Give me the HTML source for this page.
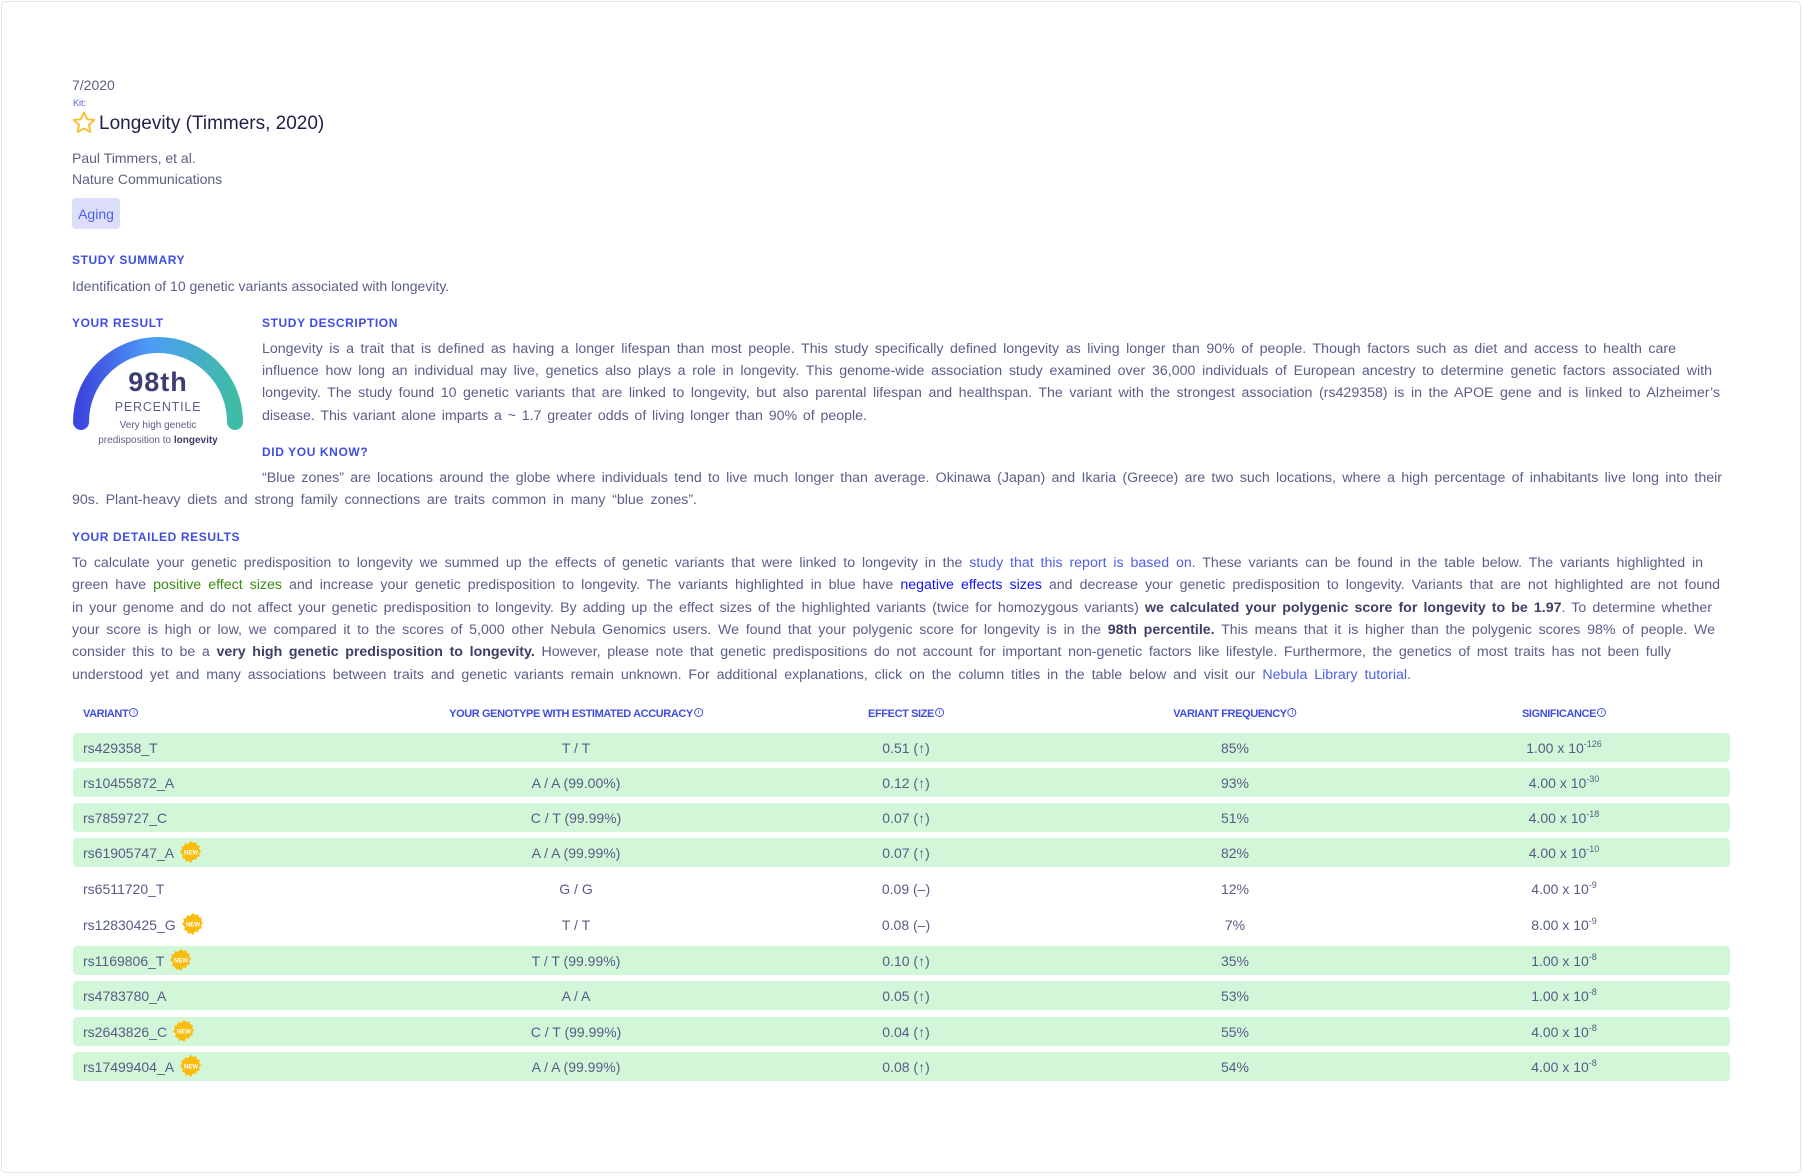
<!DOCTYPE html>
<html><head><meta charset="utf-8"><style>
*{margin:0;padding:0;box-sizing:border-box}
body{width:1803px;height:1176px;background:#fff;font-family:"Liberation Sans",sans-serif;color:#5a5e8a;position:relative;overflow:hidden}
.frame{position:absolute;left:1px;top:1px;width:1800px;height:1172px;border:1.5px solid #e1e2f2;border-radius:5px}
.a{position:absolute;white-space:nowrap}
.h{position:absolute;font-weight:bold;font-size:12px;letter-spacing:0.6px;color:#3f4ee0}
.ln{position:absolute;font-size:14.2px;text-align:justify;text-align-last:justify;height:20px;line-height:20px;overflow:visible}
.g{color:#3c8a12}.bl{color:#1414f5}.lk{color:#4f5fe8}.b{font-weight:bold;color:#3c4068}
.row{position:absolute;left:73px;width:1657px;height:29px;border-radius:4px}
.gr{background:#d2f7d8}
.c{position:absolute;top:1px;line-height:29px;font-size:14px;color:#575b85;white-space:nowrap}
.cc{transform:translateX(-50%)}
.th{position:absolute;top:708px;font-size:11px;font-weight:bold;color:#3f4ee0;letter-spacing:-0.4px;white-space:nowrap}
.i{display:inline-block;width:9px;height:9px;border:1px solid #3f4ee0;border-radius:50%;font-size:7px;line-height:7px;text-align:center;vertical-align:top;margin-left:1px;font-weight:normal}
sup{font-size:9px;line-height:0;vertical-align:6px}
.new{display:inline-block;width:22px;height:22px;vertical-align:middle;margin-left:6px;position:relative;top:-2px}
</style></head><body>
<div class="frame"></div>

<div class="a" style="left:72px;top:77px;font-size:14px;color:#5d6083">7/2020</div>
<div class="a" style="left:73px;top:98px;font-size:9px;color:#4f5fe8">Kit:</div>
<svg class="a" style="left:72px;top:111px" width="24" height="23" viewBox="0 0 24 23"><path d="M12 1.5l3.1 6.6 7.1.9-5.2 4.9 1.3 7.1L12 17.5 5.7 21l1.3-7.1-5.2-4.9 7.1-.9z" fill="none" stroke="#f5c23a" stroke-width="2" stroke-linejoin="round"/></svg>
<div class="a" style="left:99px;top:113px;font-size:19px;color:#1e2147">Longevity (Timmers, 2020)</div>
<div class="a" style="left:72px;top:150px;font-size:14px;color:#5d6083">Paul Timmers, et al.</div>
<div class="a" style="left:72px;top:171px;font-size:14px;color:#5d6083">Nature Communications</div>
<div class="a" style="left:72px;top:198px;width:48px;height:31px;background:#dcdefa;border-radius:4px;font-size:14px;color:#4f5fe8;line-height:33px;text-align:center">Aging</div>

<div class="h" style="left:72px;top:253px">STUDY SUMMARY</div>
<div class="a" style="left:72px;top:278px;font-size:14px">Identification of 10 genetic variants associated with longevity.</div>

<div class="h" style="left:72px;top:316px">YOUR RESULT</div>
<svg class="a" style="left:66px;top:332px" width="186" height="110" viewBox="0 0 186 110">
<defs><linearGradient id="gg" x1="0" y1="0" x2="1" y2="0"><stop offset="0" stop-color="#3c46de"/><stop offset="0.45" stop-color="#4d9cf6"/><stop offset="1" stop-color="#3fbca5"/></linearGradient></defs>
<path d="M15 90 A77 77 0 0 1 169 90" fill="none" stroke="url(#gg)" stroke-width="16" stroke-linecap="round"/>
</svg>
<div class="a" style="left:158px;top:367px;transform:translateX(-50%);font-size:27px;font-weight:bold;color:#3b3f70;letter-spacing:1px">98th</div>
<div class="a" style="left:158px;top:400px;transform:translateX(-50%);font-size:12.5px;color:#5a5e8a;letter-spacing:0.8px">PERCENTILE</div>
<div class="a" style="left:158px;top:420px;transform:translateX(-50%);font-size:10px;color:#5a5e8a">Very high genetic</div>
<div class="a" style="left:158px;top:435px;transform:translateX(-50%);font-size:10px;color:#5a5e8a">predisposition to <b style="color:#3c4068">longevity</b></div>

<div class="h" style="left:262px;top:316px">STUDY DESCRIPTION</div>
<div class="ln" style="left:262px;top:339px;width:1414px">Longevity is a trait that is defined as having a longer lifespan than most people. This study specifically defined longevity as living longer than 90% of people. Though factors such as diet and access to health care</div>
<div class="ln" style="left:262px;top:361px;width:1450px">influence how long an individual may live, genetics also plays a role in longevity. This genome-wide association study examined over 36,000 individuals of European ancestry to determine genetic factors associated with</div>
<div class="ln" style="left:262px;top:383px;width:1458px">longevity. The study found 10 genetic variants that are linked to longevity, but also parental lifespan and healthspan. The variant with the strongest association (rs429358) is in the APOE gene and is linked to Alzheimer’s</div>
<div class="ln" style="left:262px;top:406px;width:605px">disease. This variant alone imparts a ~ 1.7 greater odds of living longer than 90% of people.</div>

<div class="h" style="left:262px;top:445px">DID YOU KNOW?</div>
<div class="ln" style="left:262px;top:468px;width:1460px">“Blue zones” are locations around the globe where individuals tend to live much longer than average. Okinawa (Japan) and Ikaria (Greece) are two such locations, where a high percentage of inhabitants live long into their</div>
<div class="ln" style="left:72px;top:490px;width:625px">90s. Plant-heavy diets and strong family connections are traits common in many “blue zones”.</div>

<div class="h" style="left:72px;top:530px">YOUR DETAILED RESULTS</div>
<div class="ln" style="left:72px;top:553px;width:1631px">To calculate your genetic predisposition to longevity we summed up the effects of genetic variants that were linked to longevity in the <span class="lk">study that this report is based on</span>. These variants can be found in the table below. The variants highlighted in</div>
<div class="ln" style="left:72px;top:575px;width:1648px">green have <span class="g">positive effect sizes</span> and increase your genetic predisposition to longevity. The variants highlighted in blue have <span class="bl">negative effects sizes</span> and decrease your genetic predisposition to longevity. Variants that are not highlighted are not found</div>
<div class="ln" style="left:72px;top:598px;width:1640px">in your genome and do not affect your genetic predisposition to longevity. By adding up the effect sizes of the highlighted variants (twice for homozygous variants) <span class="b">we calculated your polygenic score for longevity to be 1.97</span>. To determine whether</div>
<div class="ln" style="left:72px;top:620px;width:1643px">your score is high or low, we compared it to the scores of 5,000 other Nebula Genomics users. We found that your polygenic score for longevity is in the <span class="b">98th percentile.</span> This means that it is higher than the polygenic scores 98% of people. We</div>
<div class="ln" style="left:72px;top:642px;width:1599px">consider this to be a <span class="b">very high genetic predisposition to longevity.</span> However, please note that genetic predispositions do not account for important non-genetic factors like lifestyle. Furthermore, the genetics of most traits has not been fully</div>
<div class="ln" style="left:72px;top:665px;width:1339px">understood yet and many associations between traits and genetic variants remain unknown. For additional explanations, click on the column titles in the table below and visit our <span class="lk">Nebula Library tutorial</span>.</div>

<div class="th" style="left:83px">VARIANT<span class="i">i</span></div>
<div class="th cc" style="left:576px">YOUR GENOTYPE WITH ESTIMATED ACCURACY<span class="i">i</span></div>
<div class="th cc" style="left:906px">EFFECT SIZE<span class="i">i</span></div>
<div class="th cc" style="left:1235px">VARIANT FREQUENCY<span class="i">i</span></div>
<div class="th cc" style="left:1564px">SIGNIFICANCE<span class="i">i</span></div>

<svg width="0" height="0" style="position:absolute"><defs><g id="nb"><path d="M11 0l2.2 2 2.9-.8.9 2.9 2.9.9-.8 2.9 2 2.2-2 2.2.8 2.9-2.9.9-.9 2.9-2.9-.8L11 22l-2.2-2-2.9.8-.9-2.9-2.9-.9.8-2.9L0 11l2-2.2-.8-2.9 2.9-.9.9-2.9 2.9.8z" fill="#fbbc10"/></g></defs></svg>

<div class="row gr" style="top:733px"><span class="c" style="left:10px">rs429358_T</span><span class="c cc" style="left:503px">T / T</span><span class="c cc" style="left:833px">0.51 (↑)</span><span class="c cc" style="left:1162px">85%</span><span class="c cc" style="left:1491px">1.00 x 10<sup>-126</sup></span></div>
<div class="row gr" style="top:768px"><span class="c" style="left:10px">rs10455872_A</span><span class="c cc" style="left:503px">A / A (99.00%)</span><span class="c cc" style="left:833px">0.12 (↑)</span><span class="c cc" style="left:1162px">93%</span><span class="c cc" style="left:1491px">4.00 x 10<sup>-30</sup></span></div>
<div class="row gr" style="top:803px"><span class="c" style="left:10px">rs7859727_C</span><span class="c cc" style="left:503px">C / T (99.99%)</span><span class="c cc" style="left:833px">0.07 (↑)</span><span class="c cc" style="left:1162px">51%</span><span class="c cc" style="left:1491px">4.00 x 10<sup>-18</sup></span></div>
<div class="row gr" style="top:838px"><span class="c" style="left:10px">rs61905747_A<svg class="new" viewBox="0 0 22 22"><use href="#nb"/><text x="11" y="13.5" font-size="6" font-weight="bold" fill="#fff" text-anchor="middle" font-family="Liberation Sans">NEW</text></svg></span><span class="c cc" style="left:503px">A / A (99.99%)</span><span class="c cc" style="left:833px">0.07 (↑)</span><span class="c cc" style="left:1162px">82%</span><span class="c cc" style="left:1491px">4.00 x 10<sup>-10</sup></span></div>
<div class="row" style="top:874px"><span class="c" style="left:10px">rs6511720_T</span><span class="c cc" style="left:503px">G / G</span><span class="c cc" style="left:833px">0.09 (–)</span><span class="c cc" style="left:1162px">12%</span><span class="c cc" style="left:1491px">4.00 x 10<sup>-9</sup></span></div>
<div class="row" style="top:910px"><span class="c" style="left:10px">rs12830425_G<svg class="new" viewBox="0 0 22 22"><use href="#nb"/><text x="11" y="13.5" font-size="6" font-weight="bold" fill="#fff" text-anchor="middle" font-family="Liberation Sans">NEW</text></svg></span><span class="c cc" style="left:503px">T / T</span><span class="c cc" style="left:833px">0.08 (–)</span><span class="c cc" style="left:1162px">7%</span><span class="c cc" style="left:1491px">8.00 x 10<sup>-9</sup></span></div>
<div class="row gr" style="top:946px"><span class="c" style="left:10px">rs1169806_T<svg class="new" viewBox="0 0 22 22"><use href="#nb"/><text x="11" y="13.5" font-size="6" font-weight="bold" fill="#fff" text-anchor="middle" font-family="Liberation Sans">NEW</text></svg></span><span class="c cc" style="left:503px">T / T (99.99%)</span><span class="c cc" style="left:833px">0.10 (↑)</span><span class="c cc" style="left:1162px">35%</span><span class="c cc" style="left:1491px">1.00 x 10<sup>-8</sup></span></div>
<div class="row gr" style="top:981px"><span class="c" style="left:10px">rs4783780_A</span><span class="c cc" style="left:503px">A / A</span><span class="c cc" style="left:833px">0.05 (↑)</span><span class="c cc" style="left:1162px">53%</span><span class="c cc" style="left:1491px">1.00 x 10<sup>-8</sup></span></div>
<div class="row gr" style="top:1017px"><span class="c" style="left:10px">rs2643826_C<svg class="new" viewBox="0 0 22 22"><use href="#nb"/><text x="11" y="13.5" font-size="6" font-weight="bold" fill="#fff" text-anchor="middle" font-family="Liberation Sans">NEW</text></svg></span><span class="c cc" style="left:503px">C / T (99.99%)</span><span class="c cc" style="left:833px">0.04 (↑)</span><span class="c cc" style="left:1162px">55%</span><span class="c cc" style="left:1491px">4.00 x 10<sup>-8</sup></span></div>
<div class="row gr" style="top:1052px"><span class="c" style="left:10px">rs17499404_A<svg class="new" viewBox="0 0 22 22"><use href="#nb"/><text x="11" y="13.5" font-size="6" font-weight="bold" fill="#fff" text-anchor="middle" font-family="Liberation Sans">NEW</text></svg></span><span class="c cc" style="left:503px">A / A (99.99%)</span><span class="c cc" style="left:833px">0.08 (↑)</span><span class="c cc" style="left:1162px">54%</span><span class="c cc" style="left:1491px">4.00 x 10<sup>-8</sup></span></div>
</body></html>
